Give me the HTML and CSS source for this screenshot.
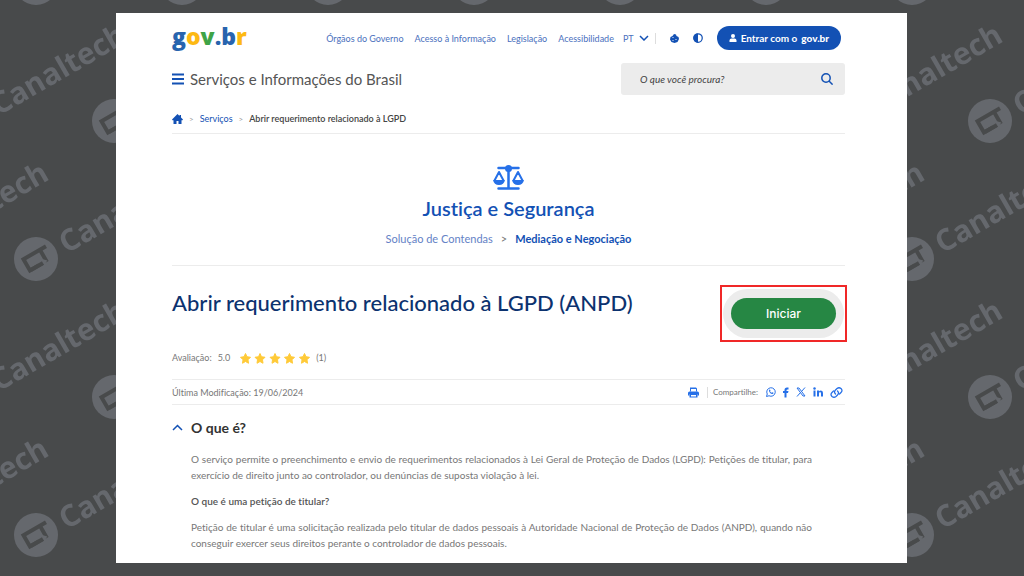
FILE: index.html
```html
<!DOCTYPE html>
<html lang="pt-BR">
<head>
    <meta charset="UTF-8">
    <meta name="viewport" content="width=device-width, initial-scale=1.0">
    <title>Abrir requerimento relacionado à LGPD (ANPD)</title>
    <link rel="stylesheet" href="styles.css">
</head>
<body>
    <!-- Watermark background -->
    <svg class="watermark" aria-hidden="true">
        <defs>
            <g id="mark">
                <circle r="22" fill="#65686d"/>
                <g transform="rotate(-30)">
                    <path d="M15 -6H-11V7H4M8 -6V8" fill="none" stroke="#484a4b" stroke-width="4"/>
                    <path d="M5 9L-1 5L3 1L9 7z" fill="#65686d"/>
                    <path d="M-10 7H4" stroke="#484a4b" stroke-width="4"/>
                    <text x="29" y="11" class="watermark-text">Canaltech</text>
                </g>
            </g>
            <pattern id="marks" x="-1" y="0" width="146" height="276" patternUnits="userSpaceOnUse">
                <use href="#mark" x="37" y="-17"/>
                <use href="#mark" x="37" y="259"/>
                <use href="#mark" x="-109" y="259"/>
                <use href="#mark" x="37" y="535"/>
                <use href="#mark" x="-109" y="535"/>
                <use href="#mark" x="115" y="121"/>
                <use href="#mark" x="-31" y="121"/>
                <use href="#mark" x="-177" y="121"/>
            </pattern>
        </defs>
        <rect width="100%" height="100%" fill="url(#marks)"/>
    </svg>

    <div class="page">
        <header>
            <div class="top-bar">
                <a href="#" class="logo" aria-label="gov.br"><span class="blue">g</span><span class="yellow">o</span><span class="green">v</span><span class="blue">.b</span><span class="yellow">r</span></a>
                <nav class="top-links">
                    <a href="#">Órgãos do Governo</a>
                    <a href="#">Acesso à Informação</a>
                    <a href="#">Legislação</a>
                    <a href="#">Acessibilidade</a>
                </nav>
                <button class="lang">PT
                    <svg width="10" height="6" viewBox="0 0 10 6"><path d="M1 1l4 4 4-4" fill="none" stroke="#1351b4" stroke-width="1.5"/></svg>
                </button>
                <div class="tools">
                    <button class="icon-button" aria-label="Cookies">
                        <svg width="9" height="9" viewBox="0 0 18 18"><path d="M8 0l4 1 1 3 4 2 1 4-3 6-6 2-6-2-3-5 1-5 4-2z" fill="#1351b4"/><g fill="#fff"><circle cx="6" cy="7" r="1.2"/><circle cx="6" cy="13" r="1.2"/><circle cx="12" cy="11" r="1.2"/></g></svg>
                    </button>
                    <button class="icon-button" aria-label="Alto contraste">
                        <svg width="10" height="10" viewBox="0 0 20 20"><circle cx="10" cy="10" r="8.5" fill="none" stroke="#1351b4" stroke-width="2.5"/><path d="M10 1a9 9 0 0 0 0 18z" fill="#1351b4"/></svg>
                    </button>
                </div>
                <button class="login">
                    <svg width="8" height="8" viewBox="0 0 16 16" fill="#fff"><circle cx="8" cy="4" r="4"/><path d="M1 16v-3q0-4 4-4h6q4 0 4 4v3z"/></svg>
                    Entrar com o <b>gov.br</b>
                </button>
            </div>
            <div class="title-bar">
                <button class="icon-button" aria-label="Menu">
                    <svg width="12" height="12" viewBox="0 0 12 12"><path d="M0 1.5h12M0 6h12M0 10.5h12" stroke="#1351b4" stroke-width="1.8"/></svg>
                </button>
                <p class="site-title">Serviços e Informações do Brasil</p>
                <form class="search">
                    <input type="text" placeholder="O que você procura?" aria-label="O que você procura?">
                    <button type="button" class="icon-button" aria-label="Buscar">
                        <svg width="12" height="12" viewBox="0 0 12 12" fill="none" stroke="#1351b4" stroke-width="1.5"><circle cx="5" cy="5" r="4.2"/><path d="M8 8l3.6 3.6"/></svg>
                    </button>
                </form>
            </div>
            <nav class="breadcrumb" aria-label="Trilha">
                <a href="#" aria-label="Início"><svg width="11" height="10" viewBox="0 0 22 20" fill="#1351b4"><path d="M11 0l4 4V2h3v5l4 4-1 1.500h-2V20h-6v-6H9v6H3v-7.500H1L0 11z"/></svg></a>
                <span class="sep">&gt;</span>
                <a href="#">Serviços</a>
                <span class="sep">&gt;</span>
                <span class="current">Abrir requerimento relacionado à LGPD</span>
            </nav>
        </header>

        <section class="category">
            <svg width="31" height="25" viewBox="0 0 62 50" fill="none" stroke="#2670e8" stroke-width="4">
                <path d="M11 6h40M31 6v40M11 47h40" stroke-width="5" stroke-linecap="round"/>
                <circle cx="31" cy="7" r="7" fill="#2670e8" stroke="none"/>
                <path d="M3 31L12 14l9 17M41 31l9-17 9 17" stroke-linejoin="round"/>
                <path d="M0 30h24q-2 10-12 10T0 30zM38 30h24q-2 10-12 10t-12-10z" fill="#2670e8" stroke="none"/>
            </svg>
            <h2>Justiça e Segurança</h2>
            <p class="category-links">
                <a href="#">Solução de Contendas</a>
                <span>&gt;</span>
                <a href="#" class="active">Mediação e Negociação</a>
            </p>
        </section>

        <main>
            <div class="service">
                <h1>Abrir requerimento relacionado à LGPD (ANPD)</h1>
                <div class="highlight">
                    <div class="halo"><button class="start">Iniciar</button></div>
                </div>
            </div>
            <div class="rating">
                <span>Avaliação:</span>
                <span>5.0</span>
                <svg class="stars" width="70" height="11" viewBox="0 0 140 22" fill="#ffca38" stroke="#ffca38" stroke-width="2" stroke-linejoin="round" role="img" aria-label="5 estrelas">
                    <defs><path id="star" d="M11 1l3 6.500 7 1-5 5 1 7-6-3.500-6 3.500 1-7-5-5 7-1z"/></defs>
                    <use href="#star"/>
                    <use href="#star" x="29"/>
                    <use href="#star" x="59"/>
                    <use href="#star" x="88"/>
                    <use href="#star" x="118"/>
                </svg>
                <span>(1)</span>
            </div>
            <div class="meta">
                <span>Última Modificação: 19/06/2024</span>
                <button class="icon-button print" aria-label="Imprimir">
                    <svg width="11" height="11" viewBox="0 0 22 22" fill="#2670e8"><path d="M4 9V1h12l2 2v6h-2V4H6v5z"/><path d="M0 17v-5q0-3 3-3h16q3 0 3 3v5h-3v-3H3v3z"/><path d="M3 13h16v8H3zm3 3v3h10v-3z" fill-rule="evenodd"/></svg>
                </button>
                <span class="share-label">Compartilhe:</span>
                <div class="share">
                    <a href="#" aria-label="WhatsApp"><svg width="10" height="10" viewBox="0 0 20 20"><path d="M1 19l1.500-5A8.500 8.500 0 1 1 6 17.500z" fill="none" stroke="#2670e8" stroke-width="2"/><path d="M6 6q2-2 3 1l-1 1.500q1 2 3.500 3L13 10.500l2 1q0 3-3 2.700Q6 12 6 6z" fill="#2670e8"/></svg></a>
                    <a href="#" aria-label="Facebook"><svg width="6" height="11" viewBox="0 0 12 22"><path d="M3 21V12H0V8h3V6q0-5 5-5h3v4H9Q7 5 7 7v1h4l-1 4H7v9z" fill="#2670e8"/></svg></a>
                    <a href="#" aria-label="X"><svg width="10" height="10" viewBox="0 0 20 20" fill="none" stroke="#2670e8"><path d="M2 2h4l12 16h-4z" stroke-width="2"/><path d="M18 1l-7 8M9 11l-7 8" stroke-width="2"/></svg></a>
                    <a href="#" aria-label="LinkedIn"><svg width="10" height="10" viewBox="0 0 20 20" fill="#2670e8"><circle cx="3" cy="3" r="2.500"/><path d="M1 7h4v12H1zM8 7h4v2q1-2 4-2 4 0 4 5v7h-4v-6q0-3-2-3t-2 3v6H8z"/></svg></a>
                    <a href="#" aria-label="Copiar link"><svg width="13" height="11" viewBox="0 0 26 22" fill="none" stroke="#2670e8" stroke-width="2.500" stroke-linecap="round"><path d="M11 14q-4-4 0-8l3-3q4-3 8 0 4 4 0 8l-3 3"/><path d="M15 8q4 4 0 8l-3 3q-4 3-8 0-4-4 0-8l3-3"/></svg></a>
                </div>
            </div>
            <section class="about">
                <h3>
                    <button class="toggle" aria-expanded="true">
                        <svg width="11" height="7" viewBox="0 0 11 7"><path d="M1 6l4.500-4.500L10 6" fill="none" stroke="#1351b4" stroke-width="1.5"/></svg>
                        O que é?
                    </button>
                </h3>
                <div class="about-text">
                    <p>O serviço permite o preenchimento e envio de requerimentos relacionados à Lei Geral de Proteção de Dados (LGPD): Petições de titular, para exercício de direito junto ao controlador, ou denúncias de suposta violação à lei.</p>
                    <p class="question">O que é uma petição de titular?</p>
                    <p>Petição de titular é uma solicitação realizada pelo titular de dados pessoais à Autoridade Nacional de Proteção de Dados (ANPD), quando não conseguir exercer seus direitos perante o controlador de dados pessoais.</p>
                </div>
            </section>
        </main>
    </div>
</body>
</html>
```
FILE: styles.css
```css
* {
    margin: 0;
    padding: 0;
    box-sizing: border-box;
}

body {
    font-family: Lato, 'Open Sans', sans-serif;
    font-size: 9px;
    font-variant-ligatures: none;
    background: #484a4b;
    color: #777;
    min-height: 100vh;
    padding: 13px 117px 13px 116px;
}

a {
    color: #1351b4;
    text-decoration: none;
}

button {
    font: inherit;
    color: inherit;
    background: none;
    border: none;
    cursor: pointer;
}

svg {
    display: block;
    flex-shrink: 0;
}

.watermark {
    position: fixed;
    top: 0;
    left: 0;
    width: 100%;
    height: 100%;
    z-index: -1;
}

.watermark-text {
    font-family: 'Open Sans', sans-serif;
    font-size: 30px;
    font-weight: 700;
    fill: #65686d;
}

.page {
    background: white;
    padding: 12px 62px 12px 56px;
}

/* Header */
.top-bar {
    display: flex;
    align-items: center;
    height: 26px;
    padding-right: 4px;
}

.logo {
    padding-bottom: 4px;
    font-family: 'Open Sans', sans-serif;
    font-size: 23px;
    font-weight: 800;
    line-height: 26px;
}

.logo .blue {
    color: #2864ae;
}

.logo .yellow {
    color: #fdb913;
}

.logo .green {
    color: #3fa447;
}

.top-links {
    display: flex;
    gap: 11px;
    margin-left: auto;
}

.top-links a,
.lang {
    color: #4a70bd;
}

.lang {
    display: flex;
    align-items: center;
    gap: 5px;
    margin-left: 9px;
    padding-right: 6px;
    border-right: 1px solid #ddd;
}

.tools {
    display: flex;
    gap: 14px;
    padding: 0 14px;
}

.login {
    display: flex;
    align-items: center;
    gap: 4px;
    height: 24px;
    padding: 0 12px;
    border-radius: 12px;
    background: #1351b4;
    color: white;
    font-size: 10px;
    font-weight: 700;
}

.title-bar {
    display: flex;
    align-items: center;
    gap: 6px;
    margin-top: 12px;
}

.site-title {
    font-size: 15px;
    line-height: 20px;
    color: #555;
}

.search {
    display: flex;
    align-items: center;
    width: 224px;
    height: 32px;
    margin-left: auto;
    padding: 0 12px 0 19px;
    border-radius: 3px;
    background: #ececec;
}

.search input {
    flex: 1;
    min-width: 0;
    border: none;
    outline: none;
    background: none;
    font: italic 10px Lato, sans-serif;
}

.search input::placeholder {
    color: #444;
}

.breadcrumb {
    display: flex;
    align-items: center;
    gap: 6px;
    height: 39px;
    padding-top: 9px;
    border-bottom: 1px solid #ececec;
}

.breadcrumb .sep {
    color: #999;
    font-size: 8px;
}

.breadcrumb .current {
    color: #444;
    font-weight: 600;
}

/* Category */
.category {
    display: flex;
    flex-direction: column;
    align-items: center;
    padding: 31px 0 18px;
    border-bottom: 1px solid #ececec;
}

.category h2 {
    margin-top: 5px;
    color: #1351b4;
    font-size: 20px;
    font-weight: 600;
    line-height: 26px;
}

.category-links {
    display: flex;
    gap: 8px;
    margin-top: 10px;
    font-size: 11px;
    line-height: 16px;
}

.category-links a {
    color: #6482c6;
}

.category-links .active {
    color: #1351b4;
    font-weight: 700;
}

/* Service */
.service {
    display: flex;
    justify-content: space-between;
    margin: 19px -2px 0 0;
}

.service h1 {
    color: #0c326f;
    font-size: 22px;
    font-weight: 500;
    line-height: 36px;
}

.highlight {
    padding: 2px 1px;
    border: 2px solid #f02828;
}

.halo {
    padding: 9px 8px;
    border-radius: 25px;
    background: #ececec;
}

.start {
    display: block;
    width: 105px;
    height: 31px;
    border-radius: 16px;
    background: #268744;
    color: white;
    font: 500 12px Inter, sans-serif;
}

.rating {
    display: flex;
    align-items: center;
    gap: 6px;
    height: 38px;
    padding-bottom: 7px;
    border-bottom: 1px solid #ececec;
}

.stars {
    margin: 3px 0 0 4px;
}

.meta {
    display: flex;
    align-items: center;
    height: 25px;
    border-bottom: 1px solid #ececec;
}

.print {
    margin-left: auto;
    padding-right: 8px;
    border-right: 1px solid #ddd;
}

.share-label {
    margin-left: 5px;
    font-size: 8px;
}

.share {
    display: flex;
    align-items: center;
    gap: 7px;
    padding: 0 2px 0 8px;
}

.about {
    padding-top: 12px;
}

.toggle {
    display: flex;
    align-items: center;
    gap: 8px;
    color: #333;
    font-size: 14px;
    font-weight: 700;
    line-height: 21px;
}

.about-text {
    padding: 13px 33px 0 19px;
    font-size: 10px;
    line-height: 16px;
    text-align: justify;
}

.about-text p {
    margin-bottom: 10px;
}

.about-text p:last-child {
    margin-bottom: 0;
}

.about-text .question {
    color: #555;
    font-weight: 600;
}
```
